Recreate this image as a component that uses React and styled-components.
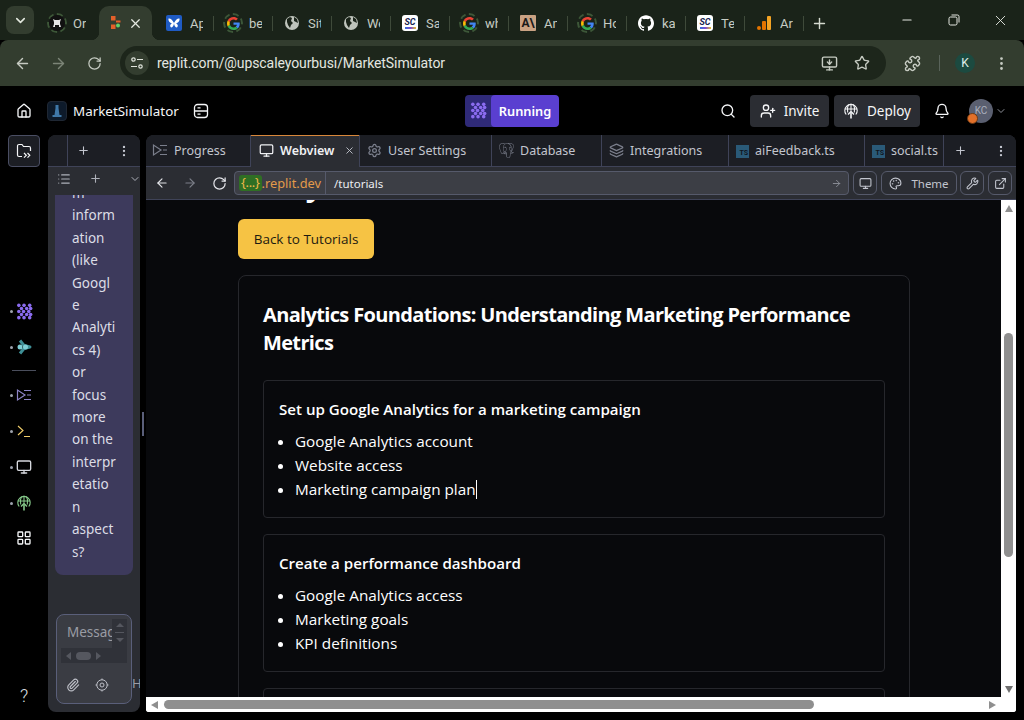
import React from 'react';
import styled, { createGlobalStyle } from 'styled-components';
import {
  House, Monitor, Search, UserPlus, Bell, ChevronDown, Plus, EllipsisVertical, Settings, Layers,
  ArrowLeft, ArrowRight, RotateCw, ExternalLink, Wrench, Palette, LayoutGrid, Paperclip, Star, Puzzle,
  MonitorDown, X, Minus, List
} from 'lucide-react';
import { SiGithub, SiPostgresql } from 'react-icons/si';

const UI = `Roboto, "Liberation Sans", sans-serif`;
const PLEX = `"Noto Sans", Roboto, sans-serif`;
const WEB = `"Open Sans", "Noto Sans", sans-serif`;

const Global = createGlobalStyle`
  html, body { margin: 0; padding: 0; height: 720px; background: #000; overflow: hidden; }
  * { box-sizing: border-box; }
`;

const Page = styled.div`display:flex;flex-direction:column;width:1024px;height:720px;background:#000;overflow:hidden;`;

/* Chrome tab strip */
const TabStrip = styled.div`display:flex;height:40px;background:#1a2319;padding-left:6px;align-items:flex-end;flex:none;`;
const TabMenu = styled.div`width:28px;height:28px;margin:0 6px 6px 0;border-radius:8px;background:#333d2f;display:flex;align-items:center;justify-content:center;color:#e3e8de;`;
const Tab = styled.div`
  position:relative;width:59px;height:34px;display:flex;align-items:center;padding-left:${p => p.$first ? 9 : 8}px;gap:8px;
  color:#c7ccc3;font:13px ${UI};
  & > svg{flex:none;}
`;
const ActiveTab = styled(Tab)`
  background:#333d2f;border-radius:10px 10px 0 0;width:53px;margin-right:6px;
  &::before,&::after{content:'';position:absolute;bottom:0;width:8px;height:8px;}
  &::before{left:-8px;background:radial-gradient(circle at 0 0,transparent 8px,#333d2f 8.5px);}
  &::after{right:-8px;background:radial-gradient(circle at 100% 0,transparent 8px,#333d2f 8.5px);}
`;
const TabTitle = styled.span`width:13px;overflow:hidden;white-space:nowrap;flex:none;`;
const TabSep = styled.i`position:absolute;right:3px;top:10px;width:1px;height:15px;background:#3f4a3a;`;
const CloseBox = styled.div`margin-left:-3px;display:flex;color:#e4e8e0;`;
const NewTab = styled.div`width:24px;height:34px;display:flex;align-items:center;justify-content:center;color:#d5dad0;`;
const WindowControls = styled.div`margin-left:auto;display:flex;height:40px;align-items:center;color:#e6e9e3;`;
const WinBtn = styled.div`width:47px;display:flex;justify-content:center;`;

const FavRing = styled.div`width:20px;height:20px;margin:-2px;border-radius:50%;border:2px dashed #3d5738;display:flex;align-items:center;justify-content:center;flex:none;`;
const FavBox = styled.div`width:16px;height:16px;border-radius:${p => p.$r || 3}px;background:${p => p.$bg};color:${p => p.$c || '#fff'};display:flex;flex-direction:column;align-items:center;justify-content:center;flex:none;font:bold ${p => p.$fs || 9}px/${p => p.$lh || 9}px ${UI};overflow:hidden;`;
const ScStripe = styled.i`width:11px;height:2px;background:linear-gradient(90deg,#2e6fd8,#7c4bd0,#e8c12c);`;

const GoogleG = () => (
  <svg width="13" height="13" viewBox="0 0 48 48">
    <path fill="#EA4335" d="M24 9.500c3.500 0 6.700 1.200 9.200 3.600l6.900-6.900C35.900 2.400 30.500 0 24 0 14.600 0 6.500 5.400 2.600 13.200l8 6.200C12.500 13.600 17.800 9.500 24 9.500z"/>
    <path fill="#4285F4" d="M47 24.500c0-1.600-.1-3.100-.4-4.500H24v9h12.900c-.6 3-2.200 5.500-4.700 7.200l7.700 6C44.400 38 47 31.800 47 24.500z"/>
    <path fill="#FBBC05" d="M10.600 28.600c-.5-1.400-.8-3-.8-4.600s.3-3.200.8-4.600l-8-6.200C.9 16.500 0 20.100 0 24s.9 7.500 2.600 10.800l8-6.200z"/>
    <path fill="#34A853" d="M24 48c6.500 0 11.900-2.100 15.900-5.800l-7.700-6c-2.200 1.400-4.900 2.300-8.200 2.300-6.200 0-11.500-4.100-13.400-9.900l-8 6.200C6.500 42.600 14.600 48 24 48z"/>
  </svg>
);
const Fav = {
  G: () => <FavRing><GoogleG /></FavRing>,
  Globe: () => (
    <svg width="16" height="16" viewBox="0 0 16 16">
      <circle cx="8" cy="8" r="7" fill="#bfc4bc" />
      <path d="M3 4l3-2 2 1-1 3 2 2-2 2-1 3-2-3-1-3zM10 2l3 2 1 4-2-1-2-1z" fill="#1a2319" />
    </svg>
  ),
  SC: () => <FavBox $bg="#fff" $c="#14224e" $fs={9}><i>SC</i><ScStripe /></FavBox>,
  Butter: () => (
    <FavBox $bg="#1f5bc4" $r={2}>
      <svg width="14" height="14" viewBox="0 0 14 14"><path d="M7 7C5 3 3 2 1.500 2.500 1 5 3 7 5 7.500 3 8 2.500 10 4 11.500c1.500 0 3-2 3-4.500 0 2.500 1.500 4.500 3 4.500C11.500 10 11 8 9 7.500 11 7 13 5 12.500 2.500 11 2 9 3 7 7z" fill="#fff" /></svg>
    </FavBox>
  ),
  Horse: () => (
    <FavRing>
      <FavBox $bg="#111" $r={8}>
        <svg width="12" height="12" viewBox="0 0 12 12"><path d="M2 2l2 1h4l2-1-1 3v2l1 3H8V8H4v2H2l1-3V5z" fill="#e6e6e6" /></svg>
      </FavBox>
    </FavRing>
  ),
  Replit: () => (
    <svg width="16" height="16" viewBox="0 0 16 16">
      <rect x="4" y="1" width="4.500" height="4.500" fill="#e2602a" />
      <rect x="4" y="9.500" width="4.500" height="4.500" fill="#e2602a" />
      <rect x="9" y="5.500" width="4.500" height="2" fill="#e2602a" />
      <circle cx="11" cy="10.500" r="2" fill="#62d06a" />
    </svg>
  ),
  Anthropic: () => <FavBox $bg="#c9a283" $c="#191919" $r={1} $fs={12} $lh={16}>A\</FavBox>,
  Github: () => <SiGithub size={16} color="#fff" />,
  Bars: () => (
    <svg width="16" height="16" viewBox="0 0 16 16">
      <rect x="11" y="1" width="4" height="14" rx="1" fill="#f4a424" />
      <rect x="6" y="6" width="4" height="9" rx="1" fill="#e37400" />
      <circle cx="3" cy="13" r="2" fill="#e37400" />
    </svg>
  )
};
const tabs = [
  ['Butter', 'Ap'], ['G', 'be'], ['Globe', 'Sit'], ['Globe', 'We'], ['SC', 'Sa'], ['G', 'wh'],
  ['Anthropic', 'An'], ['G', 'Ho'], ['Github', 'ka'], ['SC', 'Te'], ['Bars', 'Ar']
];

/* Chrome toolbar */
const Toolbar = styled.div`height:46px;background:#333d2f;border-radius:8px 8px 0 0;display:flex;align-items:center;padding-left:4px;color:#c6cbc2;flex:none;`;
const ToolBtn = styled.div`width:36px;height:36px;display:flex;align-items:center;justify-content:center;margin-left:${p => p.$ml || 0}px;color:${p => p.$dim ? '#7c8577' : '#c6cbc2'};flex:none;`;
const Omnibox = styled.div`width:766px;height:34px;margin-left:8px;background:#1d261b;border-radius:17px;display:flex;align-items:center;padding:0 8px 0 5px;`;
const TuneCircle = styled.div`width:24px;height:24px;border-radius:50%;background:#333d2f;display:flex;align-items:center;justify-content:center;color:#e1e5dd;`;
const UrlText = styled.span`margin-left:8px;color:#e3e6e0;font:14px/1 ${UI};letter-spacing:-.09px;`;
const OmniEnd = styled.div`margin-left:auto;display:flex;align-items:center;gap:16px;padding-right:8px;color:#c6cbc2;`;
const ToolDiv = styled.i`width:1px;height:16px;background:#59635a;margin:0 8px 0 9px;`;
const ProfileK = styled.div`width:20px;height:20px;border-radius:50%;background:#1c4a40;color:#dfeee8;font:12px ${UI};display:flex;align-items:center;justify-content:center;margin:0 8px 0 7px;`;

/* Replit bar */
const AppBar = styled.div`height:49px;flex:none;display:flex;align-items:center;padding:0 16px;color:#f5f6f8;font:14px ${PLEX};`;
const ProjectLogo = styled.div`width:20px;height:20px;margin-left:15px;border-radius:4px;background:#0d1a2a;border:1px solid #1f2733;display:flex;align-items:center;justify-content:center;`;
const ProjectName = styled.span`margin-left:6px;width:105px;white-space:nowrap;font-size:13.400px;`;
const IconSlot = styled.div`display:flex;margin-left:${p => p.$ml || 0}px;color:#f5f6f8;`;
const RunGroup = styled.div`display:flex;height:32px;margin-left:${p => p.$ml}px;border-radius:4px;overflow:hidden;background:#2f2a78;`;
const RunIcon = styled.div`width:26px;display:flex;align-items:center;justify-content:center;`;
const RunLabel = styled.div`width:68px;background:#5a3fd0;color:#fff;font:600 12.800px/32px ${PLEX};text-align:center;border-radius:4px;`;
const BarBtn = styled.div`height:32px;width:${p => p.$w}px;margin-left:${p => p.$ml}px;background:#2b2d33;border-radius:4px;display:flex;align-items:center;justify-content:center;gap:8px;font:13.500px ${PLEX};color:#f5f6f8;`;
const AvatarWrap = styled.div`position:relative;margin-left:19px;width:24px;height:24px;border-radius:50%;background:#5a5f70;color:#aab0be;font:10px/24px ${UI};text-align:center;`;
const AvatarBadge = styled.i`position:absolute;left:-2.500px;bottom:-1.500px;width:11px;height:11px;border-radius:50%;background:#e2702a;border:1.500px solid #6b3a14;`;

/* workspace */
const Workspace = styled.div`flex:1;display:flex;min-height:0;padding:0 8px 8px 0;`;
const Rail = styled.div`width:48px;flex:none;display:flex;flex-direction:column;align-items:center;color:#f5f6f8;`;
const FolderBtn = styled.div`width:32px;height:32px;background:#1c1e24;border:1px solid #4a4e63;border-radius:4px;display:flex;align-items:center;justify-content:center;`;
const RailGroup = styled.div`margin-top:126px;display:flex;flex-direction:column;align-items:center;width:100%;`;
const RailItem = styled.div`position:relative;height:${p => p.$h || 36}px;width:100%;display:flex;align-items:center;justify-content:center;color:${p => p.$c || '#f5f6f8'};
  &::before{content:'';display:${p => p.$dot ? 'block' : 'none'};position:absolute;left:10px;top:50%;margin-top:-1.500px;width:3px;height:3px;border-radius:50%;background:#9da2ad;}`;
const RailRule = styled.i`width:24px;height:1px;background:#4a4e5c;margin:5px 0 6px;`;
const Help = styled.div`margin-top:auto;height:24px;margin-bottom:4px;color:#dfe1e6;font:300 18px/24px ${UI};`;

const Chat = styled.div`width:92px;flex:none;background:#2b2d33;border-radius:8px;display:flex;flex-direction:column;overflow:hidden;color:#d8d9de;`;
const ChatHead = styled.div`height:32px;background:#1c1e24;display:flex;align-items:center;border-bottom:1px solid #3f4358;flex:none;color:#c2c5ce;`;
const ChatCell = styled.div`width:20px;height:31px;border-right:1px solid #3f4358;flex:none;`;
const ChatHeadBtn = styled.div`display:flex;margin-left:${p => p.$ml}px;flex:none;`;
const ChatSub = styled.div`height:23px;display:flex;align-items:center;flex:none;color:#aeb1ba;`;
const ChatScroll = styled.div`height:380px;margin:5px 7px 0;background:#3d3a5c;border-radius:0 0 8px 8px;overflow:hidden;padding:0 0 0 17px;flex:none;`;
const ChatLines = styled.div`margin-top:-13px;font:13.500px/22.400px ${PLEX};color:#dcdde6;white-space:nowrap;`;
const ChatFoot = styled.div`display:flex;align-items:flex-end;margin-top:39px;padding-left:8px;`;
const InputBox = styled.div`width:76px;height:90px;border:1px solid #5a5f7a;border-radius:8px;background:#3a3c43;padding:4px;flex:none;display:flex;flex-direction:column;`;
const Field = styled.div`display:grid;grid-template-columns:51px 15px;grid-template-rows:29px 15px;`;
const FieldText = styled.div`overflow:hidden;white-space:nowrap;padding:4px 0 0 6px;font:13.500px ${PLEX};color:#9a9ca5;`;
const FieldV = styled.div`grid-row:1 / span 2;grid-column:2;background:#303239;display:flex;flex-direction:column;align-items:center;justify-content:flex-start;gap:5px;padding:4px 0 0;`;
const VThumb = styled.i`width:9px;height:1px;background:#55575f;`;
const FieldH = styled.div`background:#303239;display:flex;align-items:center;gap:5px;padding:0 3px 0 5px;`;
const HThumb = styled.i`width:15px;height:8px;border-radius:4px;background:#55575f;`;
const Tri = styled.i`
  width:0;height:0;display:block;flex:none;border-style:solid;
  ${p => {
    const l = p.$l ?? p.$s;
    return ({
      up: `border-width:0 ${p.$s}px ${l}px;border-color:transparent transparent ${p.$c} transparent;`,
      down: `border-width:${l}px ${p.$s}px 0;border-color:${p.$c} transparent transparent transparent;`,
      left: `border-width:${p.$s}px ${l}px ${p.$s}px 0;border-color:transparent ${p.$c} transparent transparent;`,
      right: `border-width:${p.$s}px 0 ${p.$s}px ${l}px;border-color:transparent transparent transparent ${p.$c};`
    })[p.$d];
  }}
`;
const FieldIcons = styled.div`display:flex;align-items:center;gap:15px;margin:15px 0 0 5px;color:#bdbfc7;`;
const HLabel = styled.span`font:13px ${PLEX};color:#9a9ca5;margin-bottom:13px;line-height:16px;`;

const Splitter = styled.div`width:6px;flex:none;display:flex;align-items:center;justify-content:center;`;
const SplitHandle = styled.i`width:2px;height:24px;background:#5a5f7a;`;

const Main = styled.div`flex:1;min-width:0;display:flex;flex-direction:column;border-radius:8px 8px 3px 3px;overflow:hidden;background:#2b2d33;`;
const PanelTabs = styled.div`height:32px;background:#1c1e24;display:flex;border-bottom:1px solid #3f4358;flex:none;`;
const PanelTab = styled.div`
  width:${p => p.$w}px;flex:none;display:flex;align-items:center;gap:6px;padding:0 0 1px ${p => p.$pl || 7}px;
  border-right:1px solid #3f4358;font:${p => p.$active ? 600 : 400} 12.500px ${PLEX};
  color:${p => p.$active ? '#f0f1f4' : '#c2c5ce'};overflow:hidden;white-space:nowrap;
  ${p => p.$active ? 'background:#2b2d33;box-shadow:inset 0 1px 0 #d8873a;height:32px;' : ''}
`;
const TabClose = styled.span`margin-left:auto;margin-right:4px;display:flex;color:#c2c5ce;`;
const TsBox = styled.span`width:13px;height:13px;background:#2a5a78;color:#10161e;font:bold 7px/16px ${UI};text-align:right;padding-right:1px;flex:none;margin-top:2px;`;
const PanelIconBtn = styled.div`margin-left:${p => p.$ml}px;display:flex;align-items:center;color:#c2c5ce;`;

const AddressRow = styled.div`height:33px;flex:none;background:#2b2d33;display:flex;align-items:center;border-bottom:1px solid #3f4358;padding:0 4px 0 0;color:#c2c5ce;`;
const NavBtn = styled.div`width:${p => p.$w}px;display:flex;justify-content:center;flex:none;color:${p => p.$dim ? '#7c7f89' : '#e2e3e8'};`;
const AddressBox = styled.div`width:615px;height:24px;margin-left:-2px;background:#3c3e45;border:1px solid #565a6b;border-radius:4px;display:flex;align-items:center;flex:none;`;
const HostWrap = styled.div`height:22px;display:flex;align-items:center;padding:0 2px 0 4px;border-right:1px solid #565a6b;font:12.800px ${PLEX};color:#e39a4a;flex:none;width:91px;white-space:nowrap;`;
const HostTag = styled.span`background:#2f6f24;color:#f2b84b;border-radius:3px;padding:0 2px;height:16px;line-height:15px;letter-spacing:-.3px;`;
const PathText = styled.span`margin-left:8px;font:11.500px ${PLEX};color:#eceef2;`;
const PathArrow = styled.span`margin-left:auto;margin-right:6px;display:flex;color:#8d9099;`;
const SmallBtn = styled.div`height:24px;width:${p => p.$w}px;margin-left:${p => p.$ml ?? 4}px;border:1px solid #565a6b;border-radius:6px;display:flex;align-items:center;justify-content:center;gap:9px;color:#c2c5ce;font:11.500px ${PLEX};flex:none;`;

/* web view */
const WebView = styled.div`flex:1;min-height:0;display:grid;grid-template-columns:855px 15px;grid-template-rows:497px 15px;background:#fff;`;
const Viewport = styled.div`background:#08090c;overflow:hidden;padding-left:92px;font-family:${WEB};color:#fff;`;
const PageTitle = styled.h1`margin:-33px 0 0;font:bold 30px/36px ${WEB};white-space:nowrap;`;
const BackBtn = styled.div`margin-top:16px;width:136px;height:40px;background:#f6c344;border-radius:6px;color:#1d1a10;font:13.500px/40px ${WEB};text-align:center;`;
const Card = styled.div`margin-top:16px;width:672px;border:1px solid #26272c;border-radius:8px;padding:24px;`;
const CardTitle = styled.h2`margin:0 0 23px;padding-top:1px;font:bold 20px/28px ${WEB};letter-spacing:-.65px;`;
const SubCard = styled.div`border:1px solid #26272c;border-radius:4px;padding:16px;margin-bottom:16px;`;
const SubTitle = styled.h3`margin:0 0 8px -1px;font:600 15.100px/24px ${WEB};`;
const Items = styled.ul`margin:0;padding:0 0 0 15px;font:15.300px/24px ${WEB};`;
const Caret = styled.span`display:inline-block;width:1px;height:19px;background:#fff;vertical-align:-4px;`;

const VBar = styled.div`background:#fff;display:flex;flex-direction:column;align-items:center;padding:5px 0 4px;`;
const VTrackThumb = styled.i`width:9px;height:224px;background:#8f8f8f;border-radius:5px;margin-top:121px;`;
const HBar = styled.div`background:#fff;display:flex;align-items:center;padding:0 5px 0 5px;`;
const HTrackThumb = styled.i`width:650px;height:9px;background:#8f8f8f;border-radius:5px;margin-left:6px;`;
const Spacer = styled.div`flex:1;`;
const Corner = styled.div`background:#fff;`;

const agentDots = [[3, 2.500], [8.500, 2.500], [14.500, 2.500], [5.800, 5.800], [11.300, 5.800], [15.500, 5.800], [3, 9], [8, 9], [13.500, 9], [5.800, 12.200], [11.300, 12.200], [15.500, 12.200], [3, 15.500], [8.500, 15.500], [14.500, 15.500]];
const AgentDots = ({ size = 18, c = '#8b6cf0' }) => (
  <svg width={size} height={size} viewBox="0 0 18 18">
    {agentDots.map(([x, y], i) => <circle key={i} cx={x} cy={y} r="1.900" fill={c} />)}
  </svg>
);
const AssistantIcon = () => (
  <svg width="16" height="18" viewBox="0 0 16 18">
    <path d="M4 2.500l4 5 6 1.500-6 1.500-4 5" stroke="#3e8f96" strokeWidth="3" fill="none" strokeLinejoin="round" />
    <circle cx="4" cy="9" r="2.500" fill="#7fd0d6" />
    <circle cx="9.500" cy="9" r="2.500" fill="#7fd0d6" />
  </svg>
);
const ProgressIcon = ({ c = '#8d84c8', size = 16 }) => (
  <svg width={size} height={size} viewBox="0 0 16 16" fill="none" stroke={c} strokeWidth="1.200">
    <path d="M1.500 3v10L9 8z" />
    <path d="M8 3.500h7M11 8h4M8 12.500h7" />
  </svg>
);
const DeployIcon = ({ c = '#f5f6f8', size = 16 }) => (
  <svg width={size} height={size} viewBox="0 0 16 16" fill="none" stroke={c} strokeWidth="1.100">
    <path d="M8 9.500V15.500" strokeWidth="1.600" />
    <path d="M5 11.500l3-3 3 3" strokeWidth="1.400" />
    <path d="M3.200 11.500a6.200 6.200 0 1 1 9.600 0" />
    <path d="M2 6h12M8 .8v7M5.500 1.500c-1.500 3-1.500 5-.8 8M10.500 1.500c1.500 3 1.500 5 .8 8" />
  </svg>
);
const TuneIcon = () => (
  <svg width="14" height="14" viewBox="0 0 14 14" fill="none" stroke="currentColor" strokeWidth="1.200">
    <circle cx="3.500" cy="3.500" r="1.700" /><path d="M7 3.500h6M1 10.500h6" /><circle cx="10.500" cy="10.500" r="1.700" />
  </svg>
);
const ServerIcon = () => (
  <svg width="16" height="16" viewBox="0 0 16 16" fill="none" stroke="currentColor" strokeWidth="1.300">
    <rect x="1.500" y="1.500" width="13" height="13" rx="3" /><path d="M1.500 8h13M4.500 4.800h3M4.500 11.200h3" />
  </svg>
);
const FolderArrows = () => (
  <svg width="16" height="16" viewBox="0 0 16 16" fill="none" stroke="currentColor" strokeWidth="1.200">
    <path d="M6 13.500H3a1.500 1.500 0 0 1-1.500-1.500V3A1.500 1.500 0 0 1 3 1.500h3l1.500 2H13A1.500 1.500 0 0 1 14.500 5v3" />
    <path d="M8 10l2.300 2.300L8 14.600M11.500 10l2.300 2.300-2.300 2.300" />
  </svg>
);
const TargetIcon = () => (
  <svg width="14" height="14" viewBox="0 0 14 14" fill="none" stroke="currentColor" strokeWidth="1">
    <circle cx="7" cy="7" r="5.200" /><circle cx="7" cy="7" r="2" /><path d="M7 .5v1.500M7 12v1.500M.5 7H2M12 7h1.500" />
  </svg>
);

const chatLines = ['m', 'inform', 'ation', '(like', 'Googl', 'e', 'Analyti', 'cs 4)', 'or', 'focus', 'more', 'on the', 'interpr', 'etatio', 'n', 'aspect', 's?'];

export default function App() {
  return (
    <Page>
      <Global />
      <TabStrip>
        <TabMenu><ChevronDown size={15} strokeWidth={2.5} /></TabMenu>
        <Tab $first><Fav.Horse /><TabTitle>Or</TabTitle></Tab>
        <ActiveTab><Fav.Replit /><CloseBox><X size={15} /></CloseBox></ActiveTab>
        {tabs.map(([f, t], i) => {
          const F = Fav[f];
          return <Tab key={i}><F /><TabTitle>{t}</TabTitle><TabSep /></Tab>;
        })}
        <NewTab><Plus size={17} strokeWidth={2} /></NewTab>
        <WindowControls>
          <WinBtn><Minus size={14} /></WinBtn>
          <WinBtn>
            <svg width="12" height="12" viewBox="0 0 12 12" fill="none" stroke="currentColor"><rect x="1" y="3" width="8" height="8" rx="1.500" /><path d="M3.500 1h6a1.500 1.500 0 0 1 1.500 1.500v6" /></svg>
          </WinBtn>
          <WinBtn><X size={17} strokeWidth={1.3} /></WinBtn>
        </WindowControls>
      </TabStrip>
      <Toolbar>
        <ToolBtn><ArrowLeft size={17} /></ToolBtn>
        <ToolBtn $dim><ArrowRight size={17} /></ToolBtn>
        <ToolBtn><RotateCw size={15} /></ToolBtn>
        <Omnibox>
          <TuneCircle><TuneIcon /></TuneCircle>
          <UrlText>replit.com/@upscaleyourbusi/MarketSimulator</UrlText>
          <OmniEnd><MonitorDown size={17} /><Star size={16} /></OmniEnd>
        </Omnibox>
        <ToolBtn $ml={8}><Puzzle size={17} /></ToolBtn>
        <ToolDiv />
        <ProfileK>K</ProfileK>
        <ToolBtn><EllipsisVertical size={17} /></ToolBtn>
      </Toolbar>
      <AppBar>
        <IconSlot><House size={16} /></IconSlot>
        <ProjectLogo>
          <svg width="10" height="14" viewBox="0 0 10 14"><path d="M3.500 1h3v3l1 7h2v2H.5v-2h2l1-7z" fill="#3f78a8" /></svg>
        </ProjectLogo>
        <ProjectName>MarketSimulator</ProjectName>
        <IconSlot $ml={15}><ServerIcon /></IconSlot>
        <RunGroup $ml={256}>
          <RunIcon><AgentDots size={17} /></RunIcon>
          <RunLabel>Running</RunLabel>
        </RunGroup>
        <IconSlot $ml={161}><Search size={16} /></IconSlot>
        <BarBtn $w={79} $ml={14}><UserPlus size={16} />Invite</BarBtn>
        <BarBtn $w={86} $ml={5}><DeployIcon />Deploy</BarBtn>
        <IconSlot $ml={14}><Bell size={16} /></IconSlot>
        <AvatarWrap>KC<AvatarBadge /></AvatarWrap>
        <IconSlot $ml={2}><ChevronDown size={12} color="#8d9099" /></IconSlot>
      </AppBar>
      <Workspace>
        <Rail>
          <FolderBtn><FolderArrows /></FolderBtn>
          <RailGroup>
            <RailItem $dot><AgentDots size={17} /></RailItem>
            <RailItem $dot><AssistantIcon /></RailItem>
            <RailRule />
            <RailItem $dot><ProgressIcon /></RailItem>
            <RailItem $dot $c="#f2cf6b">
              <svg width="14" height="14" viewBox="0 0 14 14" fill="none" stroke="currentColor" strokeWidth="1.100"><path d="M1 2l5 4.500L1 11M7 12.500h6" /></svg>
            </RailItem>
            <RailItem $dot $c="#d6d8de"><Monitor size={16} /></RailItem>
            <RailItem $dot><DeployIcon c="#86c98a" /></RailItem>
            <RailItem $h={34}><LayoutGrid size={16} /></RailItem>
          </RailGroup>
          <Help>?</Help>
        </Rail>
        <Chat>
          <ChatHead>
            <ChatCell />
            <ChatHeadBtn $ml={9}><Plus size={13} /></ChatHeadBtn>
            <ChatHeadBtn $ml={27}><EllipsisVertical size={14} /></ChatHeadBtn>
          </ChatHead>
          <ChatSub>
            <ChatHeadBtn $ml={9}><List size={14} /></ChatHeadBtn>
            <ChatHeadBtn $ml={18}><Plus size={13} /></ChatHeadBtn>
            <ChatHeadBtn $ml={27}><ChevronDown size={12} /></ChatHeadBtn>
          </ChatSub>
          <ChatScroll>
            <ChatLines>{chatLines.map((l, i) => <div key={i}>{l}</div>)}</ChatLines>
          </ChatScroll>
          <ChatFoot>
            <InputBox>
              <Field>
                <FieldText>Message</FieldText>
                <FieldV><Tri $d="up" $s={4} $c="#55575f" /><VThumb /><Tri $d="down" $s={4} $c="#55575f" /></FieldV>
                <FieldH><Tri $d="left" $s={4} $l={5} $c="#55575f" /><HThumb /><Tri $d="right" $s={4} $l={5} $c="#55575f" /></FieldH>
              </Field>
              <FieldIcons><Paperclip size={14} /><TargetIcon /></FieldIcons>
            </InputBox>
            <HLabel>H</HLabel>
          </ChatFoot>
        </Chat>
        <Splitter><SplitHandle /></Splitter>
        <Main>
          <PanelTabs>
            <PanelTab $w={105} $pl={6}><ProgressIcon c="#7b7f8c" />Progress</PanelTab>
            <PanelTab $w={109} $active $pl={8}><Monitor size={15} />Webview<TabClose><X size={11} /></TabClose></PanelTab>
            <PanelTab $w={132}><Settings size={15} color="#7b7f8c" />User Settings</PanelTab>
            <PanelTab $w={110}><SiPostgresql size={15} color="#7b7f8c" />Database</PanelTab>
            <PanelTab $w={127}><Layers size={15} color="#7b7f8c" />Integrations</PanelTab>
            <PanelTab $w={136}><TsBox>TS</TsBox>aiFeedback.ts</PanelTab>
            <PanelTab $w={79}><TsBox>TS</TsBox>social.ts</PanelTab>
            <PanelIconBtn $ml={10}><Plus size={13} /></PanelIconBtn>
            <PanelIconBtn $ml={27}><EllipsisVertical size={14} /></PanelIconBtn>
          </PanelTabs>
          <AddressRow>
            <NavBtn $w={32}><ArrowLeft size={14} /></NavBtn>
            <NavBtn $w={24} $dim><ArrowRight size={14} /></NavBtn>
            <NavBtn $w={34}><RotateCw size={15} /></NavBtn>
            <AddressBox>
              <HostWrap><HostTag>{'{...}'}</HostTag>.replit.dev</HostWrap>
              <PathText>/tutorials</PathText>
              <PathArrow><ArrowRight size={11} /></PathArrow>
            </AddressBox>
            <SmallBtn $w={24}><Monitor size={13} /></SmallBtn>
            <SmallBtn $w={76}><Palette size={13} />Theme</SmallBtn>
            <SmallBtn $w={24} $ml={3}><Wrench size={13} /></SmallBtn>
            <SmallBtn $w={24}><ExternalLink size={13} /></SmallBtn>
          </AddressRow>
          <WebView>
            <Viewport>
              <PageTitle>Analytics Foundations</PageTitle>
              <BackBtn>Back to Tutorials</BackBtn>
              <Card>
                <CardTitle>Analytics Foundations: Understanding Marketing Performance Metrics</CardTitle>
                <SubCard>
                  <SubTitle>Set up Google Analytics for a marketing campaign</SubTitle>
                  <Items>
                    <li>Google Analytics account</li>
                    <li>Website access</li>
                    <li>Marketing campaign plan<Caret /></li>
                  </Items>
                </SubCard>
                <SubCard>
                  <SubTitle>Create a performance dashboard</SubTitle>
                  <Items>
                    <li>Google Analytics access</li>
                    <li>Marketing goals</li>
                    <li>KPI definitions</li>
                  </Items>
                </SubCard>
                <SubCard />
              </Card>
            </Viewport>
            <VBar><Tri $d="up" $s={4.5} $l={7} $c="#8f8f8f" /><VTrackThumb /><Spacer /><Tri $d="down" $s={4.5} $l={7} $c="#707070" /></VBar>
            <HBar><Tri $d="left" $s={4.5} $l={7} $c="#8f8f8f" /><HTrackThumb /><Spacer /><Tri $d="right" $s={4.5} $l={7} $c="#8f8f8f" /></HBar>
            <Corner />
          </WebView>
        </Main>
      </Workspace>
    </Page>
  );
}
